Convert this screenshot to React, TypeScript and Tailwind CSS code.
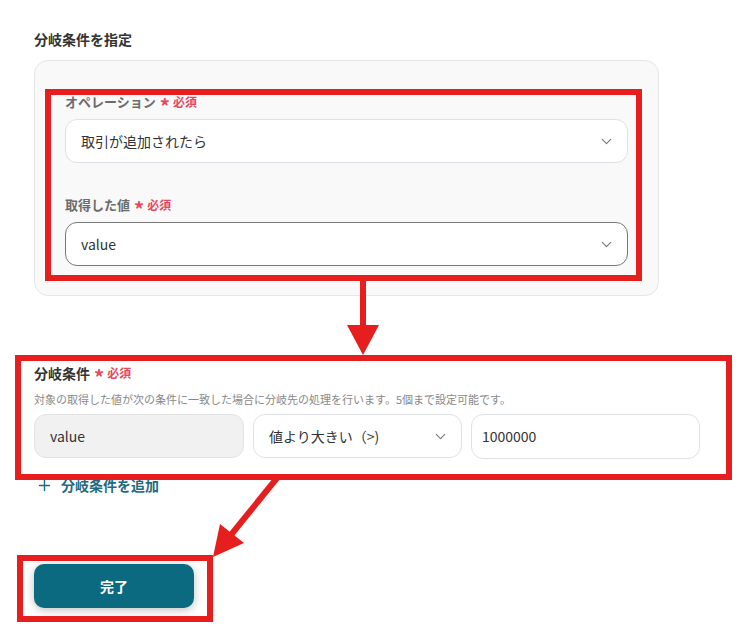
import { ChevronDown, Plus } from 'lucide-react'

const FONT = { fontFamily: '"Noto Sans CJK JP", "Noto Sans", sans-serif' }

function Required() {
  return (
    <span className="ml-[4px] inline-flex items-center text-[12px] font-bold text-[#e8475f]">
      <span className="mr-[3px] translate-y-[4px] text-[20px] leading-none">*</span>
      必須
    </span>
  )
}

function SelectBox({ value, dark }: { value: string; dark?: boolean }) {
  return (
    <div
      className={`flex h-[44px] items-center justify-between rounded-[12px] border bg-white pl-[15px] pr-[12px] text-[14px] text-[#333] ${
        dark ? 'border-[#777]' : 'border-[#dfe1e6]'
      }`}
    >
      <span>{value}</span>
      <ChevronDown size={17} strokeWidth={1.6} className="text-[#777]" />
    </div>
  )
}

export default function App() {
  return (
    <div className="relative h-[628px] w-[750px] overflow-hidden bg-white" style={FONT}>
      <div className="pl-[34px] pt-[29px]">
        <h2 className="text-[14px] font-semibold leading-[20px] text-[#333]">分岐条件を指定</h2>

        <div className="mt-[11px] w-[625px] rounded-[14px] border border-[#e6e6e6] bg-[#f9f9fa] px-[30px] pb-[29px] pt-[31px]">
          <div className="flex h-[20px] items-center text-[13px] font-bold text-[#6b6b6b]">
            オペレーション
            <Required />
          </div>
          <div className="mt-[7px]">
            <SelectBox value="取引が追加されたら" />
          </div>
          <div className="mt-[32px] flex h-[20px] items-center text-[13px] font-bold text-[#6b6b6b]">
            取得した値
            <Required />
          </div>
          <div className="mt-[7px]">
            <SelectBox value="value" dark />
          </div>
        </div>

        <div className="mt-[67px] flex h-[20px] items-center text-[14px] font-semibold text-[#333]">
          分岐条件
          <Required />
        </div>
        <p className="mt-[8px] text-[11px] leading-[16px] text-[#888]">
          対象の取得した値が次の条件に一致した場合に分岐先の処理を行います。5個まで設定可能です。
        </p>
        <div className="mt-[7px] flex gap-[9px]">
          <div className="flex h-[44px] w-[210px] items-center rounded-[12px] border border-[#e3e3e3] bg-[#f1f1f2] pl-[15px] text-[14px] text-[#333]">
            value
          </div>
          <div className="w-[209px]">
            <SelectBox value="値より大きい（>)" />
          </div>
          <div className="flex h-[45px] w-[229px] items-center rounded-[12px] border border-[#dfe1e6] bg-white pl-[10px] text-[14px] text-[#333]">
            1000000
          </div>
        </div>

        <div className="mt-[16px] flex h-[20px] items-center gap-[8px] text-[14px] font-semibold text-[#1f6a80]">
          <Plus size={17} strokeWidth={2} className="ml-[2px]" />
          分岐条件を追加
        </div>

        <button className="mt-[69px] flex h-[44px] w-[160px] items-center justify-center rounded-[10px] bg-[#0b6a80] text-[14px] font-bold text-white shadow-[0_2px_10px_rgba(0,0,0,0.25)]">
          完了
        </button>
      </div>

      {/* annotation overlays */}
      <div className="pointer-events-none absolute left-[45px] top-[89px] h-[192px] w-[597px] border-[6px] border-[#e61e1e]" />
      <div className="pointer-events-none absolute left-[15px] top-[355px] h-[125px] w-[717px] border-[6px] border-[#e61e1e]" />
      <div className="pointer-events-none absolute left-[17px] top-[555px] h-[67px] w-[196px] border-[6px] border-[#e61e1e]" />
      <svg className="pointer-events-none absolute left-0 top-0" width="750" height="628">
        <line x1="363" y1="281" x2="363" y2="327" stroke="#e61e1e" strokeWidth="6" />
        <polygon points="347,325 379,325 363,355" fill="#e61e1e" />
        <line x1="277" y1="478" x2="230" y2="536" stroke="#e61e1e" strokeWidth="6" />
        <polygon points="213,557 220,524 244,543" fill="#e61e1e" />
      </svg>
    </div>
  )
}
